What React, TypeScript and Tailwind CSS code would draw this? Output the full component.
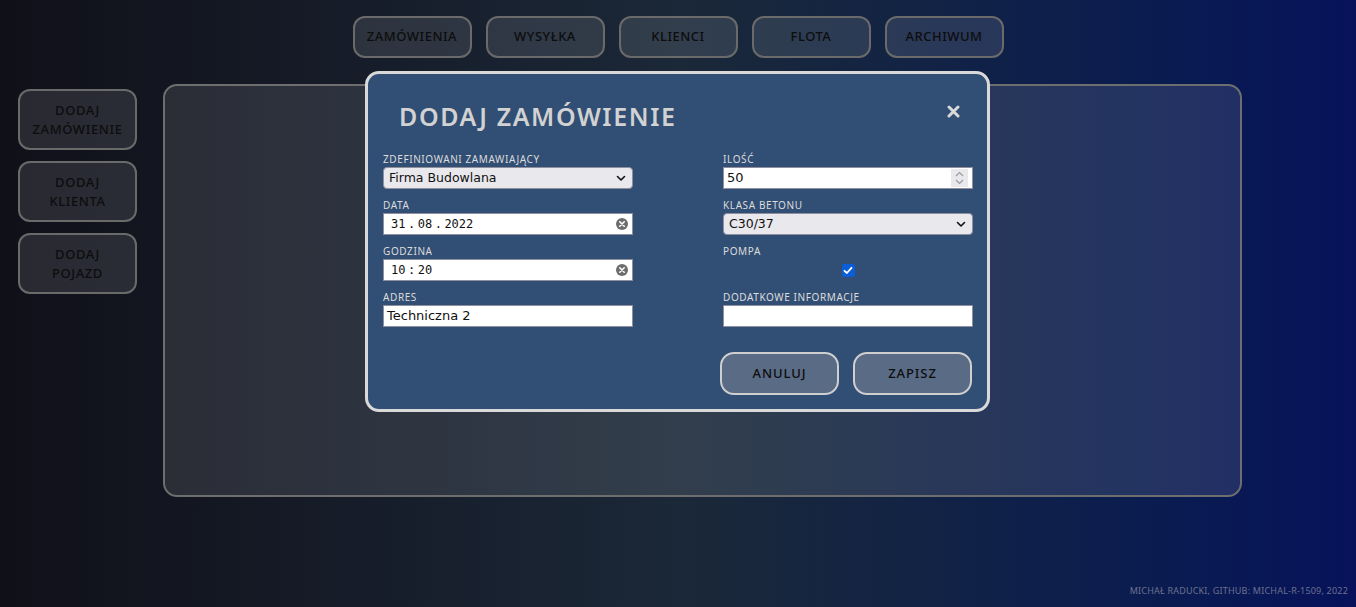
const FONT = "font-['Noto_Sans','DejaVu_Sans',sans-serif]";

const NAV = ["ZAMÓWIENIA", "WYSYŁKA", "KLIENCI", "FLOTA", "ARCHIWUM"];
const SIDE = [
  ["DODAJ", "ZAMÓWIENIE"],
  ["DODAJ", "KLIENTA"],
  ["DODAJ", "POJAZD"],
];

function ClearIcon() {
  return (
    <svg width="12" height="12" viewBox="0 0 12 12">
      <circle cx="6" cy="6" r="6" fill="#6d6d6d" />
      <path d="M3.8 3.8 L8.2 8.2 M8.2 3.8 L3.8 8.2" stroke="#fff" strokeWidth="1.6" strokeLinecap="round" />
    </svg>
  );
}

function Chevron() {
  return (
    <svg width="10" height="7" viewBox="0 0 10 7">
      <path d="M1.5 1.5 L5 5 L8.5 1.5" fill="none" stroke="#111" strokeWidth="1.6" strokeLinecap="round" strokeLinejoin="round" />
    </svg>
  );
}

function Label({ children }: { children: React.ReactNode }) {
  return <div className="text-[10px] leading-[13px] tracking-[0.6px] text-[#dcdcdc] uppercase">{children}</div>;
}

function Select({ value }: { value: string }) {
  return (
    <div className="flex h-[22px] items-center justify-between rounded-[4px] border border-[#8f8f9d] bg-[#e9e8ed] pr-[6px] pl-[5px] font-['DejaVu_Sans',sans-serif] text-[12.5px] text-[#111]">
      <span>{value}</span>
      <Chevron />
    </div>
  );
}

function Field({ label, children }: { label: string; children: React.ReactNode }) {
  return (
    <div className="flex flex-col">
      <Label>{label}</Label>
      <div className="mt-[1px]">{children}</div>
    </div>
  );
}

function TextBox({ children, mono }: { children?: React.ReactNode; mono?: boolean }) {
  return (
    <div
      className={`flex h-[22px] items-center justify-between border border-[#8f8f9d] bg-white pr-[4px] text-[#111] ${
        mono ? "pl-[7px] font-['DejaVu_Sans_Mono',monospace] text-[12px]" : "pl-[3px] font-['DejaVu_Sans',sans-serif] text-[13px]"
      }`}
    >
      {children}
    </div>
  );
}

function Segments({ parts }: { parts: string[] }) {
  return (
    <span className="flex gap-[2.5px]">
      {parts.map((p, i) => (
        <span key={i}>{p}</span>
      ))}
    </span>
  );
}

export default function App() {
  return (
    <div className={`relative h-[607px] w-full overflow-hidden bg-gradient-to-r from-[#101019] via-[#1b2838] to-[#07125a] ${FONT}`}>
      {/* top nav */}
      <nav className="flex justify-center gap-[14px] pt-[16px]">
        {NAV.map((n) => (
          <button
            key={n}
            className="h-[42px] w-[119px] rounded-[12px] border-2 border-[#6a6a6a] bg-white/[0.1] text-[13px] font-medium tracking-[0.5px] text-[#0d0d0d]"
          >
            {n}
          </button>
        ))}
      </nav>

      <div className="mt-[26px] flex gap-[26px] pl-[18px]">
        <div className="mt-[5px] flex flex-col gap-[11px]">
          {SIDE.map(([a, b]) => (
            <button
              key={b}
              className="flex h-[61px] w-[119px] flex-col items-center justify-center rounded-[12px] border-2 border-[#6a6a6a] bg-white/[0.1] text-[13px] leading-[19px] font-medium tracking-[0.6px] text-[#0d0d0d]"
            >
              <span>{a}</span>
              <span>{b}</span>
            </button>
          ))}
        </div>
        <div className="h-[413px] w-[1079px] rounded-[14px] border-2 border-[#6e6e6e] bg-white/[0.1]" />
      </div>

      {/* modal */}
      <div className="absolute top-[71px] left-[365px] h-[341px] w-[625px] rounded-[14px] border-[3px] border-[#d9d9d9] bg-[#314e74]">
        <div className="flex items-start justify-between pt-[26px] pr-[27px] pl-[31px]">
          <h2 className="text-[25px] leading-[32px] font-semibold tracking-[1.6px] text-[#d2d2d2]">DODAJ ZAMÓWIENIE</h2>
          <svg width="13" height="13" viewBox="0 0 13 13" className="mt-[5px]">
            <path d="M2 2 L11 11 M11 2 L2 11" stroke="#d9d9d9" strokeWidth="3" strokeLinecap="round" />
          </svg>
        </div>

        <div className="mt-[21px] grid grid-cols-2 gap-x-[90px] pr-[14px] pl-[15px]">
          <div className="flex flex-col gap-[10px]">
            <Field label="Zdefiniowani zamawiający">
              <Select value="Firma Budowlana" />
            </Field>
            <Field label="Data">
              <TextBox mono>
                <Segments parts={["31", ".", "08", ".", "2022"]} />
                <ClearIcon />
              </TextBox>
            </Field>
            <Field label="Godzina">
              <TextBox mono>
                <Segments parts={["10", ":", "20"]} />
                <ClearIcon />
              </TextBox>
            </Field>
            <Field label="Adres">
              <TextBox>
                <span>Techniczna 2</span>
              </TextBox>
            </Field>
          </div>

          <div className="flex flex-col gap-[10px]">
            <Field label="Ilość">
              <TextBox>
                <span>50</span>
                <span className="flex h-[18px] w-[17px] flex-col items-center justify-center bg-[#e9e9ed]">
                  <svg width="9" height="14" viewBox="0 0 9 14">
                    <path d="M1 5 L4.5 1.5 L8 5 M1 9 L4.5 12.5 L8 9" fill="none" stroke="#9a9a9a" strokeWidth="1.2" />
                  </svg>
                </span>
              </TextBox>
            </Field>
            <Field label="Klasa betonu">
              <Select value="C30/37" />
            </Field>
            <Field label="Pompa">
              <div className="flex h-[22px] items-center justify-center">
                <span className="mt-[1px] flex h-[13px] w-[13px] items-center justify-center rounded-[2px] bg-[#0b5ed8]">
                  <svg width="10" height="9" viewBox="0 0 10 9">
                    <path d="M1.5 4.8 L3.9 7 L8.5 1.8" fill="none" stroke="#fff" strokeWidth="1.8" strokeLinecap="round" strokeLinejoin="round" />
                  </svg>
                </span>
              </div>
            </Field>
            <Field label="Dodatkowe informacje">
              <TextBox />
            </Field>
          </div>
        </div>

        <div className="mt-[25px] flex justify-end gap-[14px] pr-[15px]">
          <button className="h-[43px] w-[119px] rounded-[14px] border-2 border-[#cfcfcf] bg-[#5a6b86] text-[13px] font-medium tracking-[0.9px] text-[#0d0d0d]">
            ANULUJ
          </button>
          <button className="h-[43px] w-[119px] rounded-[14px] border-2 border-[#cfcfcf] bg-[#5a6b86] text-[13px] font-medium tracking-[0.9px] text-[#0d0d0d]">
            ZAPISZ
          </button>
        </div>
      </div>

      <footer className="absolute right-[8px] bottom-[10px] text-[9px] tracking-[0.2px] text-[#6c7190]">
        MICHAŁ RADUCKI, GITHUB: MICHAL-R-1509, 2022
      </footer>
    </div>
  );
}
